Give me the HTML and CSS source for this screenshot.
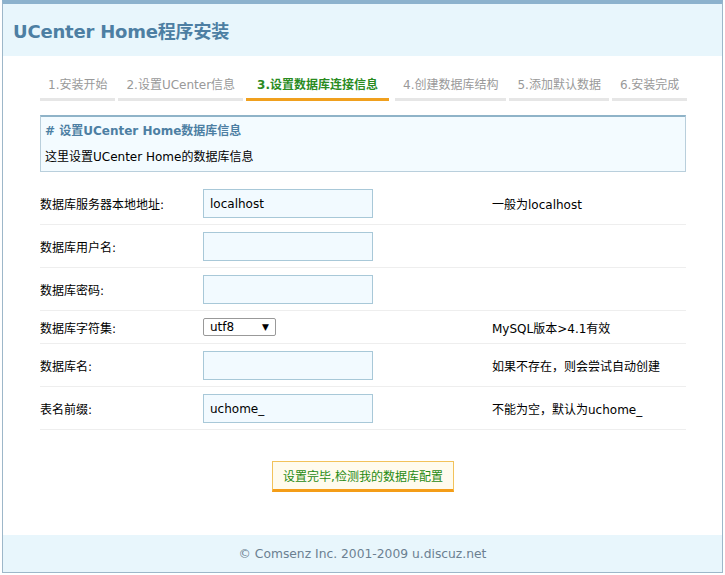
FILE: index.html
```html
<!DOCTYPE html>
<html lang="zh-CN">
<head>
    <meta charset="UTF-8">
    <title>UCenter Home程序安装</title>
    <link rel="stylesheet" href="styles.css">
</head>
<body>
    <div class="wrap">
        <header class="top">
            <h1>UCenter Home程序安装</h1>
        </header>
        <div class="main">
            <ul class="steps">
                <li>1.安装开始</li>
                <li>2.设置UCenter信息</li>
                <li class="current">3.设置数据库连接信息</li>
                <li>4.创建数据库结构</li>
                <li>5.添加默认数据</li>
                <li>6.安装完成</li>
            </ul>
            <div class="infobox">
                <h3># 设置UCenter Home数据库信息</h3>
                <p>这里设置UCenter Home的数据库信息</p>
            </div>
            <form class="dbform">
                <table>
                    <tr>
                        <th>数据库服务器本地地址:</th>
                        <td><input type="text" class="txt" value="localhost"></td>
                        <td class="note">一般为localhost</td>
                    </tr>
                    <tr>
                        <th>数据库用户名:</th>
                        <td><input type="text" class="txt" value=""></td>
                        <td class="note"></td>
                    </tr>
                    <tr>
                        <th>数据库密码:</th>
                        <td><input type="password" class="txt" value=""></td>
                        <td class="note"></td>
                    </tr>
                    <tr class="short">
                        <th>数据库字符集:</th>
                        <td>
                            <div class="select">utf8<span class="arrow">&#9660;</span></div>
                        </td>
                        <td class="note">MySQL版本&gt;4.1有效</td>
                    </tr>
                    <tr>
                        <th>数据库名:</th>
                        <td><input type="text" class="txt" value=""></td>
                        <td class="note">如果不存在，则会尝试自动创建</td>
                    </tr>
                    <tr>
                        <th>表名前缀:</th>
                        <td><input type="text" class="txt" value="uchome_"></td>
                        <td class="note">不能为空，默认为uchome_</td>
                    </tr>
                </table>
                <div class="actions">
                    <button type="button" class="btn">设置完毕,检测我的数据库配置</button>
                </div>
            </form>
        </div>
        <footer class="foot">
            <p>&copy; Comsenz Inc. 2001-2009 u.discuz.net</p>
        </footer>
    </div>
</body>
</html>
```

FILE: styles.css
```css
body {
    margin: 0;
    font-family: "DejaVu Sans", Verdana, "Noto Sans CJK SC", sans-serif;
    font-size: 12px;
    color: #000;
    background: #fff;
}

.wrap {
    margin: 0 2px;
    border: 1px solid #9db7c9;
    border-top: 4px solid #8cb2cd;
}

.top {
    background: #e8f6fc;
    height: 52px;
    padding: 0 10px;
    display: flex;
    align-items: center;
}

.top h1 {
    margin: 0;
    font-size: 18px;
    color: #4d7fa3;
    font-weight: bold;
    letter-spacing: -0.2px;
}

.main {
    padding: 12px 36px 0 37px;
    height: 467px;
}

.steps {
    list-style: none;
    margin: 0;
    padding: 0;
    display: flex;
    gap: 3px;
}

.steps li {
    padding: 7px 8px 6px;
    color: #999;
    border-bottom: 3px solid #e6e6e6;
    white-space: nowrap;
}

.steps li:nth-child(4) {
    margin-left: 3px;
}

.steps li.current {
    color: #2a8b1f;
    font-weight: bold;
    border-bottom-color: #f0a01e;
    padding: 7px 11px 6px;
}

.infobox {
    margin-top: 14px;
    width: 646px;
    background: #f3fbff;
    border: 1px solid #b9cfdc;
    border-top: 2px solid #8fb3c8;
    padding: 6px 4px 0;
    box-sizing: border-box;
    height: 57px;
}

.infobox h3 {
    margin: 0;
    font-size: 12px;
    color: #4d7fa3;
    font-weight: bold;
    line-height: 16px;
}

.infobox p {
    margin: 10px 0 0;
    line-height: 16px;
}

.dbform table {
    border-collapse: collapse;
    width: 646px;
    margin-top: 10px;
}

.dbform th {
    text-align: left;
    font-weight: normal;
    width: 163px;
    padding: 7px 0 6px;
    border-bottom: 1px solid #eeeeee;
}

.dbform td {
    padding: 7px 0 6px;
    border-bottom: 1px solid #eeeeee;
}

.dbform tr.short th,
.dbform tr.short td {
    padding: 7px 0;
}

.dbform td.note {
    width: 194px;
}

.txt {
    box-sizing: border-box;
    width: 170px;
    height: 29px;
    border: 1px solid #a8c8d8;
    background: #f2faff;
    padding: 0 6px;
    font-family: "DejaVu Sans", Verdana, "Noto Sans CJK SC", sans-serif;
    font-size: 12px;
    color: #000;
    display: block;
}

.select {
    box-sizing: border-box;
    width: 73px;
    height: 18px;
    border: 1px solid #999;
    border-radius: 2px;
    padding: 0 6px;
    line-height: 16px;
    display: flex;
    justify-content: space-between;
    background: #fff;
}

.arrow {
    font-size: 9px;
}

.actions {
    margin-top: 31px;
    padding-left: 232px;
}

.btn {
    width: 182px;
    height: 31px;
    background: #fffbed;
    border: 1px solid #f2c25a;
    border-bottom: 3px solid #f49d18;
    color: #1f8a12;
    font-family: "DejaVu Sans", Verdana, "Noto Sans CJK SC", sans-serif;
    font-size: 12px;
    padding: 0;
    cursor: pointer;
}

.foot {
    background: #e8f6fc;
    height: 37px;
    display: flex;
    align-items: center;
    justify-content: center;
}

.foot p {
    margin: 0;
    color: #6b8091;
    font-size: 12.3px;
}
```
